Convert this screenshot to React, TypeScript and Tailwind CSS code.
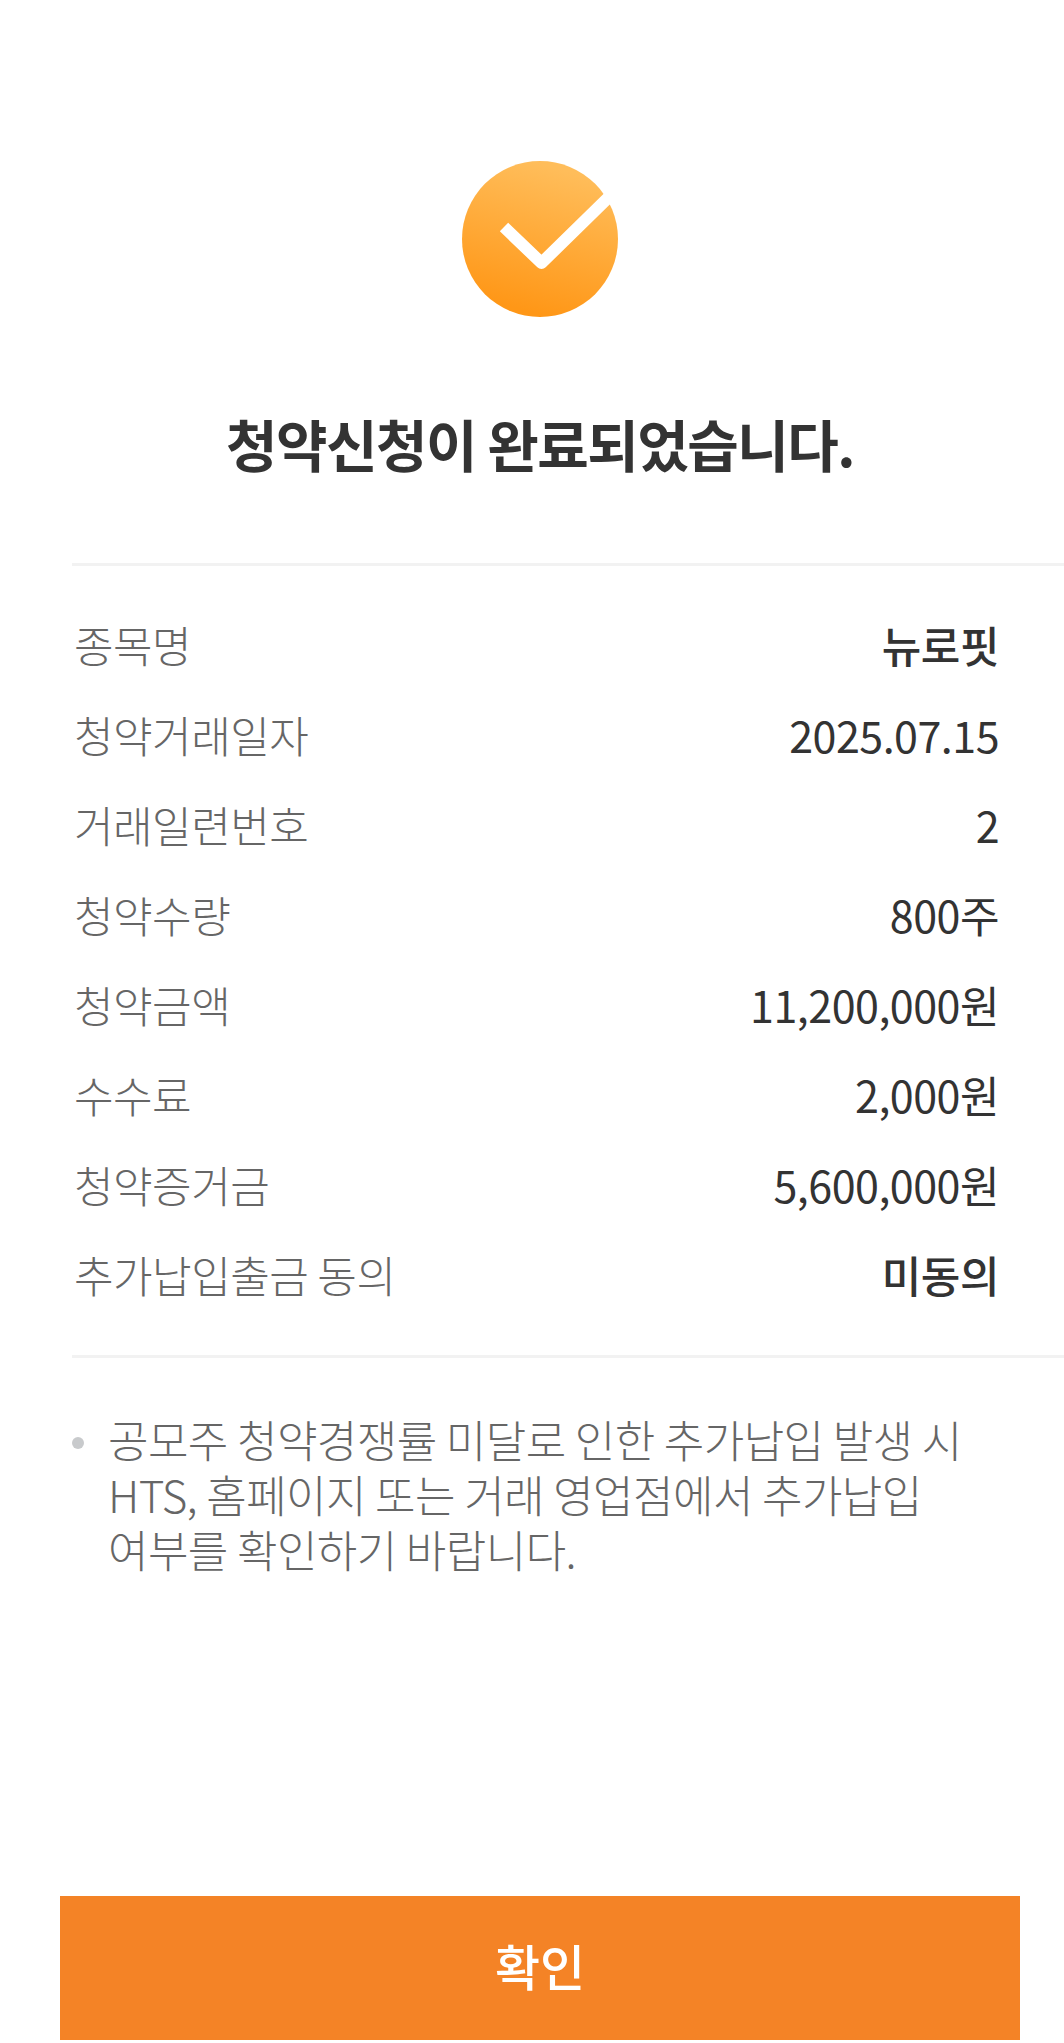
const rows = [
  { label: '종목명', value: '뉴로핏', strong: true },
  { label: '청약거래일자', value: '2025.07.15' },
  { label: '거래일련번호', value: '2' },
  { label: '청약수량', value: '800주' },
  { label: '청약금액', value: '11,200,000원' },
  { label: '수수료', value: '2,000원' },
  { label: '청약증거금', value: '5,600,000원' },
  { label: '추가납입출금 동의', value: '미동의', strong: true },
]

const CheckIcon = () => (
  <svg width="156" height="156" viewBox="0 0 156 156" className="block">
    <defs>
      <linearGradient id="done" x1="0.62" y1="0.05" x2="0.38" y2="0.95">
        <stop offset="0" stopColor="#ffbd5a" />
        <stop offset="1" stopColor="#ff9717" />
      </linearGradient>
    </defs>
    <circle cx="78" cy="78" r="78" fill="url(#done)" />
    <path
      d="M42 66 L79.500 102 L151 32"
      fill="none"
      stroke="#fff"
      strokeWidth="12"
      strokeLinejoin="round"
    />
  </svg>
)

export default function App() {
  return (
    <div className="h-[2043px] w-full overflow-hidden bg-white font-['Noto_Sans_CJK_KR','Noto_Sans',sans-serif]">
      <div className="flex h-full w-[1080px] flex-col">
        <div className="flex justify-center pt-[161px]">
          <CheckIcon />
        </div>
        <h1 className="mt-[88px] text-center text-[56px] leading-[76px] font-bold tracking-[-1.5px] text-[#333333]">
          청약신청이 완료되었습니다.
        </h1>
        <div className="mt-[82px] ml-[72px] border-t-[3px] border-[#f2f2f2]" />
        <div className="mt-[33px] mr-[81px] ml-[74px]">
          {rows.map((row) => (
            <div key={row.label} className="flex h-[90px] items-center justify-between text-[43px] tracking-[-0.5px]">
              <span className="font-light text-[#666666]">{row.label}</span>
              <span className={row.strong ? 'font-medium text-[#333333]' : 'text-[#333333]'}>{row.value}</span>
            </div>
          ))}
        </div>
        <div className="mt-[36px] ml-[72px] border-t-[3px] border-[#f2f2f2]" />
        <div className="mt-[54px] ml-[72px] flex items-start">
          <span className="mt-[25px] h-[12px] w-[12px] shrink-0 rounded-full bg-[#c8cacc]" />
          <p className="ml-[24px] w-[900px] text-[44px] leading-[55px] font-light tracking-[-0.55px] text-[#666666]">
            공모주 청약경쟁률 미달로 인한 추가납입 발생 시<br />
            HTS, 홈페이지 또는 거래 영업점에서 추가납입<br />
            여부를 확인하기 바랍니다.
          </p>
        </div>
        <button className="mt-auto mb-[3px] ml-[60px] flex h-[144px] w-[960px] items-center justify-center bg-[#f48326] pb-[7px] text-[49px] font-medium text-white">
          확인
        </button>
      </div>
    </div>
  )
}
